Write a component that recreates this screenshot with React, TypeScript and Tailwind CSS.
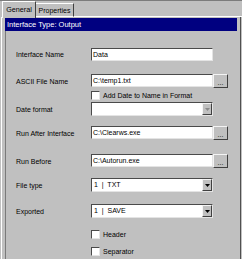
import React from 'react';

const sunken =
  'border border-t-[#4a4a4a] border-l-[#4a4a4a] border-r-[#e4e4e4] border-b-[#e4e4e4]';
const raised =
  'border border-t-[#f4f4f4] border-l-[#f4f4f4] border-r-[#404040] border-b-[#404040]';

function Label({ children }: { children: React.ReactNode }) {
  return <div className="w-[85px] shrink-0 pl-[10px] leading-[9px]">{children}</div>;
}

function TextBox({ value, browse }: { value: string; browse?: boolean }) {
  return (
    <div className="flex items-start">
      <div className={`w-[122px] h-[13px] bg-white ${sunken} pl-[1px] leading-[11px] whitespace-nowrap overflow-hidden`}>
        {value}
      </div>
      {browse && (
        <div className={`w-[15px] h-[14px] bg-[#c0c0c0] ${raised} flex items-end justify-center leading-[8px] text-[7px]`}>
          ...
        </div>
      )}
    </div>
  );
}

function Combo({ value, disabled }: { value: string; disabled?: boolean }) {
  return (
    <div className={`w-[122px] h-[14px] bg-white ${sunken} flex items-center justify-between`}>
      <span className="pl-[2px] leading-[10px] whitespace-pre">{value}</span>
      <div className={`w-[10px] h-[12px] bg-[#c0c0c0] ${raised} flex items-center justify-center`}>
        <svg width="5" height="3" viewBox="0 0 5 3">
          <path d="M0 0h5L2.5 3z" fill={disabled ? '#8a8a8a' : '#000'} />
        </svg>
      </div>
    </div>
  );
}

function Check({ label }: { label: string }) {
  return (
    <div className="flex items-center h-[10px] pl-[85px]">
      <div className={`w-[9px] h-[9px] bg-white ${sunken}`} />
      <span className="ml-[3px] leading-[9px] whitespace-nowrap">{label}</span>
    </div>
  );
}

export default function App() {
  return (
    <div
      className="w-[242px] h-[259px] bg-[#c0c0c0] text-black text-[7px] overflow-hidden flex flex-col"
      style={{ fontFamily: '"Liberation Sans", Arial, sans-serif' }}
    >
      {/* tab strip */}
      <div className="h-[17px] shrink-0 border-t border-[#7c7c7c] flex items-end pl-[2px] relative">
        <div className="h-[17px] w-[34px] border-t border-l border-r border-t-white border-l-white border-r-[#404040] flex items-center justify-center leading-[9px] text-[7.2px] bg-[#c0c0c0] z-10 -mb-[1px] pb-[1px]">
          General
        </div>
        <div className="h-[14px] w-[38px] border-t border-r border-t-white border-r-[#404040] border-b border-b-white flex items-center justify-center leading-[9px] text-[7px]">
          Properties
        </div>
        <div className="flex-1 h-[1px] bg-white" />
      </div>

      {/* tab page */}
      <div className="flex-1 ml-[1px] mr-[1px] border-l border-l-white border-r border-r-[#505050] flex flex-col pt-[1px]">
        <div className="mx-[3px] h-[13px] bg-[#000080] text-white text-[7.5px] leading-[13px] pl-[2px]">
          Interface Type: Output
        </div>
        <div className="flex-1 ml-[3px] border-l border-l-[#7a7a7a] flex flex-col">
          <div className="mt-[17px] flex items-center">
            <Label>Interface Name</Label>
            <TextBox value="Data" />
          </div>
          <div className="mt-[13px] flex items-center">
            <Label>ASCII File Name</Label>
            <TextBox value="C:\temp1.txt" browse />
          </div>
          <div className="mt-[2px]">
            <Check label="Add Date to Name in Format" />
          </div>
          <div className="mt-[2px] flex items-center">
            <Label>Date format</Label>
            <Combo value="" disabled />
          </div>
          <div className="mt-[10px] flex items-center">
            <Label>Run After Interface</Label>
            <TextBox value="C:\Clearws.exe" browse />
          </div>
          <div className="mt-[14px] flex items-center">
            <Label>Run Before</Label>
            <TextBox value="C:\Autorun.exe" browse />
          </div>
          <div className="mt-[10px] flex items-center">
            <Label>File type</Label>
            <Combo value="1  |  TXT" />
          </div>
          <div className="mt-[12px] flex items-center">
            <Label>Exported</Label>
            <Combo value="1  |  SAVE" />
          </div>
          <div className="mt-[11px]">
            <Check label="Header" />
          </div>
          <div className="mt-[7px]">
            <Check label="Separator" />
          </div>
        </div>
      </div>
    </div>
  );
}
